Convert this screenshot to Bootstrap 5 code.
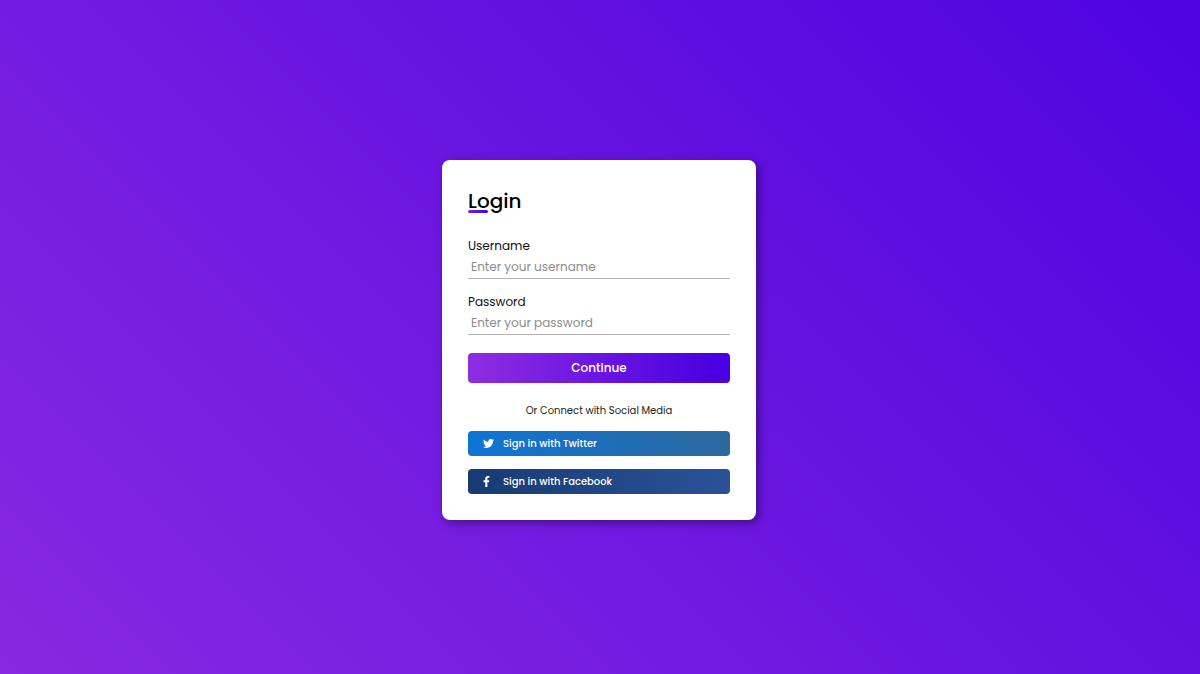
<!DOCTYPE html>
<html lang="en">
<head>
<meta charset="utf-8">
<meta name="viewport" content="width=device-width, initial-scale=1">
<title>Login</title>
<link href="https://cdn.jsdelivr.net/npm/bootstrap@5.3.0/dist/css/bootstrap.min.css" rel="stylesheet">
<style>
  body {
    font-family: Poppins, Inter, sans-serif;
    background: linear-gradient(45deg, #8829e1, #4e03e0);
    color: #000;
  }
  .login-card {
    width: 100%;
    max-width: 314px;
    padding: 26px;
    margin: 6px 2px 0 0;
    border-radius: 8px;
    background: #fff;
    box-shadow: 3px 3px 10px rgba(0, 0, 0, .4);
  }
  .login-title {
    font-size: 20px;
    line-height: 30px;
    font-weight: 500;
    margin-bottom: 21px;
  }
  .login-title::after {
    content: "";
    position: absolute;
    left: 0;
    bottom: 3px;
    width: 20px;
    height: 3px;
    border-radius: 3px;
    background: linear-gradient(to right, #7a1fe1, #4a00e0);
  }
  .field { margin-bottom: 14px; }
  .field label {
    display: block;
    font-size: 12px;
    line-height: 18px;
    color: #111;
  }
  .field .form-control {
    height: 24px;
    padding: 0 3px;
    border: 0;
    border-bottom: 1px solid #b4b4b4;
    border-radius: 0;
    font-size: 12px;
    line-height: 18px;
    box-shadow: none;
  }
  .field .form-control:focus { border-color: #6a11cb; }
  .field .form-control::placeholder { color: #8c8c8c; }
  .login-card .btn {
    border: 0;
    border-radius: 4px;
    color: #fff;
    font-weight: 500;
  }
  .btn-continue {
    height: 30px;
    padding: 0;
    margin-top: 4px;
    font-size: 12px;
    line-height: 18px;
    background: linear-gradient(to right, #8e2de2, #4a00e0 95%);
  }
  .or-text {
    margin: 19px 0 11px;
    font-size: 10px;
    line-height: 18px;
    color: #222;
  }
  .btn-social {
    height: 25px;
    padding: 0 15px;
    gap: 9px;
    font-size: 10px;
    line-height: 18px;
  }
  .social-list { gap: 13px; }
  .btn-social svg { width: 11px; height: 11px; fill: #fff; }
  .icon-slot { width: 11px; }
  .btn-twitter { background: linear-gradient(to right, #0d75d6, #2d689d); }
  .btn-facebook { background: linear-gradient(to right, #173b72, #2a5298); }
</style>
</head>
<body>
<main class="min-vh-100 d-flex align-items-center justify-content-center">
  <form class="login-card">
    <h1 class="login-title position-relative">Login</h1>
    <div class="field">
      <label for="username">Username</label>
      <input class="form-control" type="text" id="username" placeholder="Enter your username">
    </div>
    <div class="field">
      <label for="password">Password</label>
      <input class="form-control" type="password" id="password" placeholder="Enter your password">
    </div>
    <button class="btn btn-continue w-100" type="submit">Continue</button>
    <p class="or-text text-center">Or Connect with Social Media</p>
    <div class="d-grid social-list">
      <button class="btn btn-social btn-twitter d-flex align-items-center" type="button">
        <span class="icon-slot d-flex"><svg viewBox="0 0 512 512" aria-hidden="true"><path d="M459.37 151.716c.325 4.548.325 9.097.325 13.645 0 138.72-105.583 298.558-298.558 298.558-59.452 0-114.68-17.219-161.137-47.106 8.447.974 16.568 1.299 25.34 1.299 49.055 0 94.213-16.568 130.274-44.832-46.132-.975-84.792-31.188-98.112-72.772 6.498.974 12.995 1.624 19.818 1.624 9.421 0 18.843-1.3 27.614-3.573-48.081-9.747-84.143-51.98-84.143-102.985v-1.299c13.969 7.797 30.214 12.67 47.431 13.319-28.264-18.843-46.781-51.005-46.781-87.391 0-19.492 5.197-37.36 14.294-52.954 51.655 63.675 129.3 105.258 216.365 109.807-1.624-7.797-2.599-15.918-2.599-24.04 0-57.828 46.782-104.934 104.934-104.934 30.213 0 57.502 12.67 76.67 33.137 23.715-4.548 46.456-13.32 66.599-25.34-7.798 24.366-24.366 44.833-46.132 57.827 21.117-2.273 41.584-8.122 60.426-16.243-14.292 20.791-32.161 39.308-52.628 54.253z"/></svg></span>
        <span>Sign in with Twitter</span>
      </button>
      <button class="btn btn-social btn-facebook d-flex align-items-center" type="button">
        <span class="icon-slot d-flex"><svg viewBox="0 0 320 512" preserveAspectRatio="xMinYMid meet" aria-hidden="true"><path d="M279.14 288l14.22-92.66h-88.91v-60.13c0-25.35 12.42-50.06 52.24-50.06h40.42V6.26S260.43 0 225.36 0c-73.22 0-121.08 44.38-121.08 124.72v70.62H22.89V288h81.39v224h100.17V288z"/></svg></span>
        <span>Sign in with Facebook</span>
      </button>
    </div>
  </form>
</main>
<script src="https://cdn.jsdelivr.net/npm/bootstrap@5.3.0/dist/js/bootstrap.bundle.min.js"></script>
</body>
</html>
